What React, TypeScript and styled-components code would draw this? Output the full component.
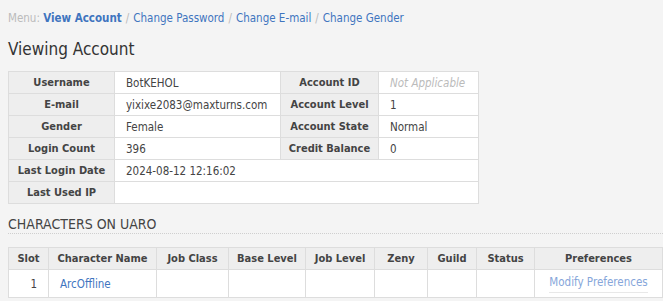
import React from "react";
import styled, { createGlobalStyle } from "styled-components";

const GlobalStyle = createGlobalStyle`
  html, body {
    margin: 0;
    background: #f4f4f4;
  }
  body {
    font-family: "DejaVu Sans Condensed", "DejaVu Sans", sans-serif;
    font-size: 11.5px;
    color: #444;
  }
`;

const Page = styled.div`
  padding: 11px 0 0 8px;
`;

const Menu = styled.div`
  line-height: 15px;
  color: #bbb;
  white-space: nowrap;
`;

const MenuLink = styled.a<{ $active?: boolean }>`
  color: #3f75bf;
  text-decoration: none;
  font-weight: ${(p) => (p.$active ? "bold" : "normal")};
`;

const Sep = styled.span`
  color: #bbb;
  margin: 0 4px;
`;

const Heading = styled.h2`
  margin: 13px 0 0 0;
  font-size: 17px;
  font-weight: normal;
  line-height: 20px;
  color: #333;
`;

const Table = styled.table<{ $width: number }>`
  border-collapse: collapse;
  table-layout: fixed;
  width: ${(p) => p.$width}px;
  background: #fff;
`;

const InfoTable = styled(Table)`
  margin-top: 12px;
`;

const Row = styled.tr<{ $h?: number }>`
  height: ${(p) => p.$h ?? 22}px;
`;

const Label = styled.th`
  background: #eeeeee;
  border: 1px solid #dddddd;
  font-size: 11px;
  font-weight: bold;
  text-align: center;
  color: #444;
  padding: 0 6px;
  white-space: nowrap;
`;

const Cell = styled.td<{ $align?: string }>`
  border: 1px solid #dddddd;
  padding: 0 11px;
  color: #444;
  text-align: ${(p) => p.$align ?? "left"};
  white-space: nowrap;
`;

const Muted = styled.span`
  color: #bbb;
  font-style: italic;
`;

const SectionTitle = styled.h3`
  margin: 11px 0 0 0;
  font-size: 14px;
  font-weight: normal;
  line-height: 18px;
  padding-bottom: 0;
  border-bottom: 1px dotted #cfcfcf;
  color: #444;
  text-transform: uppercase;
`;

const CharTable = styled(Table)`
  margin-top: 13px;
`;

const Link = styled.a`
  color: #3f75bf;
  text-decoration: none;
`;

const PrefLink = styled.a`
  color: #86a6da;
  text-decoration: none;
  display: inline-block;
  padding-bottom: 3px;
  border-bottom: 1px solid #e8e8e8;
`;

const infoRows: [string, React.ReactNode, string?, React.ReactNode?][] = [
  ["Username", "BotKEHOL", "Account ID", <Muted>Not Applicable</Muted>],
  ["E-mail", "yixixe2083@maxturns.com", "Account Level", "1"],
  ["Gender", "Female", "Account State", "Normal"],
  ["Login Count", "396", "Credit Balance", "0"],
  ["Last Login Date", "2024-08-12 12:16:02"],
  ["Last Used IP", ""],
];

const charCols: [string, number][] = [
  ["Slot", 40],
  ["Character Name", 108],
  ["Job Class", 72],
  ["Base Level", 77],
  ["Job Level", 69],
  ["Zeny", 53],
  ["Guild", 49],
  ["Status", 58],
  ["Preferences", 128],
];

export default function App() {
  return (
    <>
      <GlobalStyle />
      <Page>
        <Menu>
          Menu: <MenuLink $active href="#">View Account</MenuLink>
          <Sep>/</Sep>
          <MenuLink href="#">Change Password</MenuLink>
          <Sep>/</Sep>
          <MenuLink href="#">Change E-mail</MenuLink>
          <Sep>/</Sep>
          <MenuLink href="#">Change Gender</MenuLink>
        </Menu>
        <Heading>Viewing Account</Heading>
        <InfoTable $width={470}>
          <colgroup>
            <col style={{ width: 106 }} />
            <col style={{ width: 166 }} />
            <col style={{ width: 98 }} />
            <col style={{ width: 100 }} />
          </colgroup>
          <tbody>
            {infoRows.map(([l1, v1, l2, v2]) => (
              <Row key={l1}>
                <Label>{l1}</Label>
                {l2 ? (
                  <>
                    <Cell>{v1}</Cell>
                    <Label>{l2}</Label>
                    <Cell>{v2}</Cell>
                  </>
                ) : (
                  <Cell colSpan={3}>{v1}</Cell>
                )}
              </Row>
            ))}
          </tbody>
        </InfoTable>
        <SectionTitle>Characters on uaRO</SectionTitle>
        <CharTable $width={654}>
          <colgroup>
            {charCols.map(([n, w]) => (
              <col key={n} style={{ width: w }} />
            ))}
          </colgroup>
          <thead>
            <Row>
              {charCols.map(([n]) => (
                <Label key={n}>{n}</Label>
              ))}
            </Row>
          </thead>
          <tbody>
            <Row $h={28}>
              <Cell $align="right">1</Cell>
              <Cell>
                <Link href="#">ArcOffline</Link>
              </Cell>
              <Cell />
              <Cell />
              <Cell />
              <Cell />
              <Cell />
              <Cell />
              <Cell $align="center">
                <PrefLink href="#">Modify Preferences</PrefLink>
              </Cell>
            </Row>
          </tbody>
        </CharTable>
      </Page>
    </>
  );
}
